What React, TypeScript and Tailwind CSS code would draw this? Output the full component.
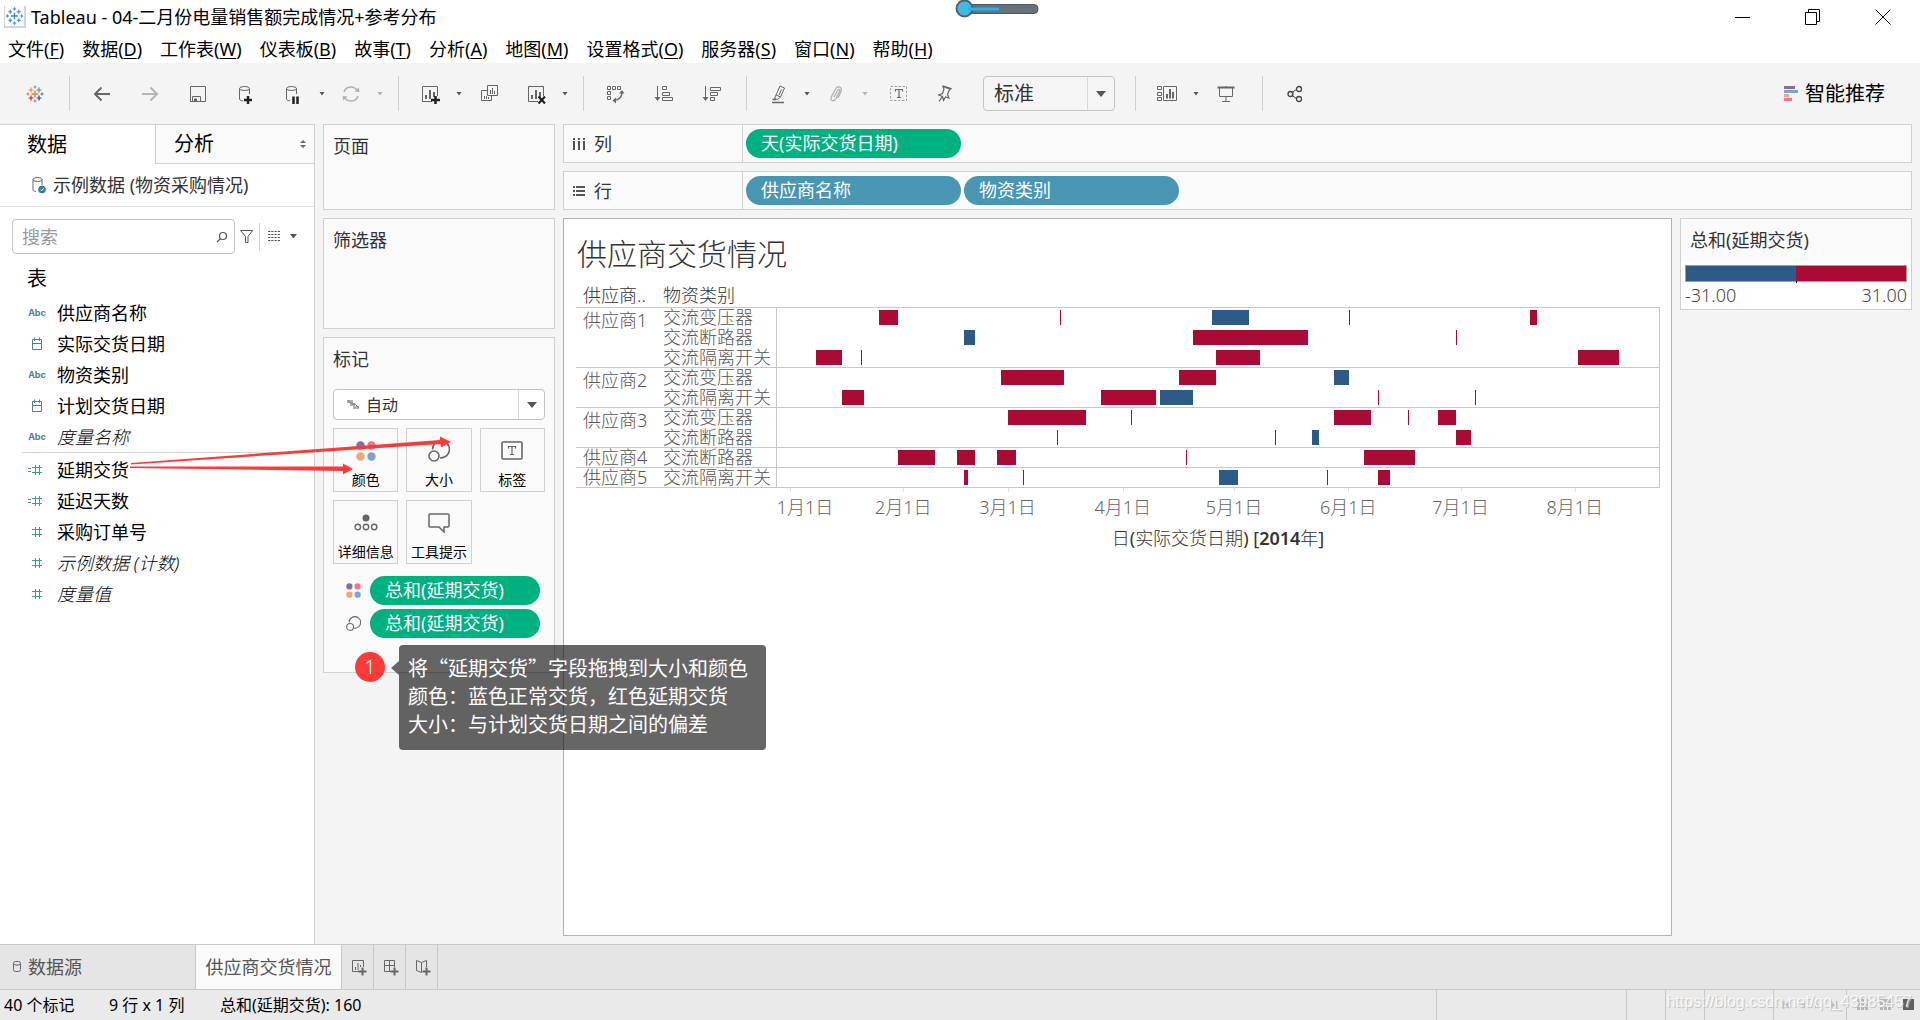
import type { ReactNode } from "react";

/* ---------- data ---------- */

const menus: [string, string][] = [
  ["文件", "F"],
  ["数据", "D"],
  ["工作表", "W"],
  ["仪表板", "B"],
  ["故事", "T"],
  ["分析", "A"],
  ["地图", "M"],
  ["设置格式", "O"],
  ["服务器", "S"],
  ["窗口", "N"],
  ["帮助", "H"],
];

type FieldKind = "abc" | "date" | "num" | "calc";
type Field = { kind: FieldKind; name: string; italic?: boolean };

const dimensions: Field[] = [
  { kind: "abc", name: "供应商名称" },
  { kind: "date", name: "实际交货日期" },
  { kind: "abc", name: "物资类别" },
  { kind: "date", name: "计划交货日期" },
  { kind: "abc", name: "度量名称", italic: true },
];

const measures: Field[] = [
  { kind: "calc", name: "延期交货" },
  { kind: "calc", name: "延迟天数" },
  { kind: "num", name: "采购订单号" },
  { kind: "num", name: "示例数据 (计数)", italic: true },
  { kind: "num", name: "度量值", italic: true },
];

/* Bars are [start, width, colour] on an axis of 882 units. */
const AXIS = 882;
type Bar = [number, number, "r" | "b"];
type Row = { supplier?: string; span?: number; category: string; bars: Bar[] };

const rows: Row[] = [
  {
    supplier: "供应商1",
    span: 3,
    category: "交流变压器",
    bars: [[102, 19, "r"], [283, 1, "r"], [435, 37, "b"], [572, 1, "r"], [753, 7, "r"]],
  },
  { category: "交流断路器", bars: [[187, 11, "b"], [416, 115, "r"], [679, 1, "r"]] },
  {
    category: "交流隔离开关",
    bars: [[39, 26, "r"], [84, 1, "r"], [439, 44, "r"], [801, 41, "r"]],
  },
  {
    supplier: "供应商2",
    span: 2,
    category: "交流变压器",
    bars: [[224, 63, "r"], [402, 37, "r"], [557, 15, "b"]],
  },
  {
    category: "交流隔离开关",
    bars: [[65, 22, "r"], [324, 55, "r"], [383, 33, "b"], [601, 1, "r"], [698, 1, "r"]],
  },
  {
    supplier: "供应商3",
    span: 2,
    category: "交流变压器",
    bars: [[231, 78, "r"], [354, 1, "r"], [557, 37, "r"], [631, 1, "r"], [661, 18, "r"]],
  },
  {
    category: "交流断路器",
    bars: [[280, 1, "r"], [498, 1, "r"], [535, 7, "b"], [679, 15, "r"]],
  },
  {
    supplier: "供应商4",
    span: 1,
    category: "交流断路器",
    bars: [[121, 37, "r"], [180, 18, "r"], [220, 19, "r"], [409, 1, "r"], [587, 51, "r"]],
  },
  {
    supplier: "供应商5",
    span: 1,
    category: "交流隔离开关",
    bars: [[187, 4, "r"], [246, 1, "r"], [442, 19, "b"], [550, 1, "r"], [601, 12, "r"]],
  },
];

const months: { label: string; tick: number; at: number }[] = [
  { label: "1月1日", tick: 14, at: 29 },
  { label: "2月1日", tick: 127, at: 127 },
  { label: "3月1日", tick: 231, at: 231 },
  { label: "4月1日", tick: 346, at: 346 },
  { label: "5月1日", tick: 457, at: 457 },
  { label: "6月1日", tick: 571, at: 571 },
  { label: "7月1日", tick: 683, at: 683 },
  { label: "8月1日", tick: 797, at: 797 },
];

const pct = (v: number) => `${(v / AXIS) * 100}%`;

/* ---------- icons ---------- */

function Icon({
  children,
  w = 20,
  h = 20,
  stroke = "#666",
}: {
  children: ReactNode;
  w?: number;
  h?: number;
  stroke?: string;
}) {
  return (
    <svg
      aria-hidden="true"
      className="shrink-0"
      width={w}
      height={h}
      viewBox={`0 0 ${w} ${h}`}
      fill="none"
      stroke={stroke}
    >
      {children}
    </svg>
  );
}

function plus(x: number, y: number, r: number, c: string, sw = 1) {
  return (
    <path
      key={`${x}-${y}`}
      d={`M${x - r} ${y}H${x + r}M${x} ${y - r}V${y + r}`}
      stroke={c}
      strokeWidth={sw}
    />
  );
}

const LogoIcon = () => (
  <Icon>
    {plus(10, 10, 3.5, "#eb7f2d", 1.4)}
    {plus(6, 6, 2.5, "#eb912c", 1.2)}
    {plus(14, 6, 2.5, "#59879b", 1.2)}
    {plus(6, 14, 2.5, "#c72037", 1.2)}
    {plus(14, 14, 2.5, "#1f457e", 1.2)}
    {plus(10, 3, 1.5, "#7199a6")}
    {plus(3, 10, 1.5, "#7199a6")}
    {plus(17, 10, 1.5, "#5b6591")}
    {plus(10, 17, 1.5, "#7f88b0")}
  </Icon>
);

const AppIcon = () => (
  <svg
    aria-hidden="true"
    className="shrink-0 border-r-2 border-b-2 border-l border-gray-300 bg-gray-50"
    width="22"
    height="22"
    viewBox="0 0 20 20"
    fill="none"
  >
    {plus(10, 10, 3.5, "#3b8ac0", 1.4)}
    {plus(5.5, 5.5, 2, "#3b8ac0", 1.2)}
    {plus(14.5, 5.5, 2, "#3b8ac0", 1.2)}
    {plus(5.5, 14.5, 2, "#3b8ac0", 1.2)}
    {plus(14.5, 14.5, 2, "#3b8ac0", 1.2)}
    {plus(10, 2.5, 1.7, "#3b8ac0")}
    {plus(2.5, 10, 1.7, "#3b8ac0")}
    {plus(17.5, 10, 1.7, "#3b8ac0")}
    {plus(10, 17.5, 1.7, "#3b8ac0")}
  </svg>
);

const cylinder = (
  <>
    <ellipse cx="8.5" cy="4.5" rx="5" ry="2" />
    <path d="M3.5 4.5V15c0 1 1.500 1.700 3.500 1.900M13.500 4.500V10" />
  </>
);

const sheetBox = <path d="M17.500 12V2.500H2.500V17.500H12" />;
const sheetBars = <path d="M6 15V11M10 15V6M14 13V8" strokeWidth="2" />;

const Caret = ({ light = false }: { light?: boolean }) => (
  <svg aria-hidden="true" width="6" height="4" viewBox="0 0 6 4" fill={light ? "#b0b0b0" : "#555"}>
    <path d="M0.500 0H5.500L3 3.500z" />
  </svg>
);

const BigCaret = () => (
  <svg aria-hidden="true" width="10" height="6" viewBox="0 0 10 6" fill="#555">
    <path d="M0 0H10L5 6z" />
  </svg>
);

const ColorDots = ({ size = 20 }: { size?: number }) => (
  <svg aria-hidden="true" width={size} height={size} viewBox="0 0 20 20">
    <circle cx="4.500" cy="4.500" r="4.200" fill="#876f9c" />
    <circle cx="15.500" cy="4.500" r="4.200" fill="#f6738a" />
    <circle cx="4.500" cy="15.500" r="4.200" fill="#f3a47a" />
    <circle cx="15.500" cy="15.500" r="4.200" fill="#7fa3cd" />
  </svg>
);

const SizeIcon = ({ size = 22 }: { size?: number }) => (
  <svg
    aria-hidden="true"
    width={size}
    height={size}
    viewBox="0 0 22 22"
    fill="none"
    stroke="#666"
    strokeWidth="1.600"
  >
    <circle cx="6" cy="16" r="5" />
    <path d="M4.500 9.500A8.500 8.500 0 1 1 12 17.800" />
  </svg>
);

function FieldIcon({ kind }: { kind: FieldKind }) {
  if (kind === "abc")
    return (
      <span className="w-6 text-center font-['Inter',sans-serif] text-[9px] leading-3 font-bold text-[#4c8199]">
        Abc
      </span>
    );
  if (kind === "date")
    return (
      <Icon w={24} h={14} stroke="#4c8199">
        <path d="M7.500 2.500H16.500V12.500H7.500zM7.500 6.500H16.500M9.500 0.500V4M14.500 0.500V4" />
      </Icon>
    );
  return (
    <Icon w={24} h={14} stroke="#3f9f78">
      <path d="M10.500 2V12M14.500 2V12M7 4.500H17M7 9.500H17" />
      {kind === "calc" && <path d="M3 5.500H6M3 8.500H6" />}
    </Icon>
  );
}

/* ---------- small parts ---------- */

function Tool({ label, split = false, children }: { label: string; split?: boolean; children: ReactNode }) {
  return (
    <button
      type="button"
      aria-label={label}
      className={`flex h-9 shrink-0 items-center justify-center ${split ? "w-[46px]" : "w-12"}`}
    >
      {children}
    </button>
  );
}

function Drop({ label, light = false }: { label: string; light?: boolean }) {
  return (
    <button type="button" aria-label={label} className="flex h-9 w-3 shrink-0 items-center justify-center">
      <Caret light={light} />
    </button>
  );
}

const Sep = ({ className = "mr-2 ml-3" }: { className?: string }) => (
  <div className={`h-[35px] w-px shrink-0 bg-[#cfcfcf] ${className}`} />
);

function FieldRow({ field }: { field: Field }) {
  return (
    <li>
      <button type="button" className="flex h-[31px] w-full items-center gap-2 pl-[25px] text-left">
        <FieldIcon kind={field.kind} />
        <span className={field.italic ? "font-light italic" : ""}>{field.name}</span>
      </button>
    </li>
  );
}

function Card({ title, className = "", children }: { title: string; className?: string; children?: ReactNode }) {
  return (
    <section className={`border border-[#d0d0d0] bg-[#fafafa] px-[9px] ${className}`}>
      <h2 className="h-11 leading-[42px] text-[#333]">{title}</h2>
      {children}
    </section>
  );
}

function Pill({ text, color }: { text: string; color: "green" | "blue" }) {
  return (
    <button
      type="button"
      className={`h-[29px] w-[215px] truncate rounded-full px-[15px] text-left leading-[29px] text-white ${
        color === "green" ? "bg-[#00b180]" : "bg-[#4996b2]"
      }`}
    >
      {text}
    </button>
  );
}

function Shelf({ icon, title, children }: { icon: ReactNode; title: string; children: ReactNode }) {
  return (
    <section className="flex h-[39px] items-stretch border border-[#d0d0d0] bg-[#fafafa]">
      <h2 className="flex w-[179px] shrink-0 items-center gap-2 border-r border-[#d0d0d0] pl-2 text-[#333]">
        {icon}
        {title}
      </h2>
      <div className="flex items-center gap-[3px] pl-[3px]">{children}</div>
    </section>
  );
}

function MarkButton({ label, children }: { label: string; children: ReactNode }) {
  return (
    <button
      type="button"
      className="flex h-[64px] flex-col items-center justify-between border border-[#d0d0d0] pt-[10px] pb-px text-sm leading-5 whitespace-nowrap text-black"
    >
      <span className="flex h-6 items-center">{children}</span>
      {label}
    </button>
  );
}

function MarkPill({ icon }: { icon: ReactNode }) {
  return (
    <div className="flex h-[29px] items-center">
      <span className="flex w-[37px] justify-center pl-1">{icon}</span>
      <button
        type="button"
        className="mr-[5px] h-[29px] flex-1 rounded-full bg-[#00b180] px-[15px] text-left leading-[29px] text-white"
      >
        总和(延期交货)
      </button>
    </div>
  );
}

/* ---------- page sections ---------- */

function TitleBar() {
  return (
    <header className="relative bg-white text-black">
      <div className="flex h-[34px] items-center">
        <div className="flex flex-1 items-center gap-[5px] pl-1">
          <AppIcon />
          <h1>Tableau - 04-二月份电量销售额完成情况+参考分布</h1>
        </div>
        <div className="mr-0.5 flex">
          <button type="button" aria-label="最小化" className="flex h-8 w-[70px] items-center justify-center">
            <Icon w={16} h={16} stroke="#000">
              <path d="M0 8.500H15" />
            </Icon>
          </button>
          <button type="button" aria-label="还原" className="flex h-8 w-[70px] items-center justify-center">
            <Icon w={16} h={16} stroke="#000">
              <path d="M0.500 3.500H11.500V15.500H0.500zM3.500 3.500V0.500H14.500V12.500H11.500" />
            </Icon>
          </button>
          <button type="button" aria-label="关闭" className="flex h-8 w-[70px] items-center justify-center">
            <Icon w={16} h={16} stroke="#000">
              <path d="M0.500 0.500L15.500 15.500M15.500 0.500L0.500 15.500" />
            </Icon>
          </button>
        </div>
      </div>
      <nav className="flex h-[29px] items-start gap-[18px] pl-2">
        {menus.map(([name, key]) => (
          <button key={key} type="button" className="leading-[30px] whitespace-nowrap">
            {name}(<u className="underline-offset-2">{key}</u>)
          </button>
        ))}
      </nav>
      <svg
        aria-hidden="true"
        className="absolute top-0 left-1/2 -ml-1.5"
        width="86"
        height="20"
        viewBox="0 0 86 20"
      >
        <rect x="8" y="4.500" width="76" height="9" rx="4" fill="#64727e" stroke="#4b5963" />
        <circle cx="10.500" cy="8.500" r="8" fill="#3fb9e6" stroke="#526370" strokeWidth="2" />
        <rect x="14" y="7.500" width="31" height="3" fill="#2fb0ea" />
      </svg>
    </header>
  );
}

function Toolbar() {
  return (
    <div className="flex h-[61px] shrink-0 items-center">
      <button type="button" aria-label="起始页" className="flex h-9 w-[69px] items-center justify-center">
        <LogoIcon />
      </button>
      <Sep className="mr-2" />
      <Tool label="撤消">
        <Icon>
          <path d="M18 10H3M9.500 3.500L3 10L9.500 16.500" strokeWidth="2" />
        </Icon>
      </Tool>
      <Tool label="重做">
        <Icon stroke="#b5b5b5">
          <path d="M2 10H17M10.500 3.500L17 10L10.500 16.500" strokeWidth="2" />
        </Icon>
      </Tool>
      <Tool label="保存">
        <Icon>
          <path d="M2.500 2.500H17.500V17.500H2.500zM4.500 17.500V12.500H12.500V17.500" />
          <path d="M6 16H9" strokeWidth="3" />
        </Icon>
      </Tool>
      <Tool label="新建数据源">
        <Icon>
          {cylinder}
          <path d="M8 16H16M12 12V20" stroke="#222" strokeWidth="2.500" />
        </Icon>
      </Tool>
      <Tool label="暂停自动更新" split>
        <Icon>
          {cylinder}
          <path d="M10.500 12.500V20M14.500 12.500V20" stroke="#222" strokeWidth="2.500" />
        </Icon>
      </Tool>
      <Drop label="自动更新选项" />
      <Tool label="运行更新" split>
        <Icon stroke="#b0b0b0">
          <path d="M3 8A7.300 7.300 0 0 1 16.500 7M17 12A7.300 7.300 0 0 1 3.500 13" strokeWidth="1.500" />
          <path d="M13.500 7.500L18.500 8L17.800 3.500zM6.500 12.500L1.500 12L2.200 16.500z" fill="#b0b0b0" stroke="none" />
        </Icon>
      </Tool>
      <Drop label="运行更新选项" light />
      <Sep />
      <Tool label="新建工作表" split>
        <Icon>
          {sheetBox}
          {sheetBars}
          <path d="M11 16H20M15.500 12V20" stroke="#222" strokeWidth="2.500" />
        </Icon>
      </Tool>
      <Drop label="新建选项" />
      <Tool label="复制">
        <Icon>
          <path d="M8.500 1.500H18.500V11.500H8.500zM8.500 6.500H2.500V16.500H12.500V11.500M11.500 10V6M13.500 10V4M15.500 10V7M5.500 15V12M7.500 15V12M9.500 15V13" />
        </Icon>
      </Tool>
      <Tool label="清除工作表" split>
        <Icon>
          {sheetBox}
          {sheetBars}
          <path d="M12.500 12.500L19 19.500M19 12.500L12.500 19.500" stroke="#222" strokeWidth="2.200" />
        </Icon>
      </Tool>
      <Drop label="清除选项" />
      <Sep />
      <Tool label="交换行和列">
        <Icon>
          <path d="M1.500 2.500H4.500V5.500H1.500zM6.500 2.500H9.500V5.500H6.500zM11.500 2.500H14.500V5.500H11.500zM1.500 7.500H4.500V10.500H1.500zM1.500 12.500H4.500V15.500H1.500z" />
          <path d="M16 8C16 13 13 16 8 16.500" strokeWidth="1.400" />
          <path d="M13 9.500L16 6L18.500 9.500zM10 13.500L6.500 16.500L10 19.500z" fill="#666" stroke="none" />
        </Icon>
      </Tool>
      <Tool label="升序排序">
        <Icon>
          <path d="M3.500 2V15M8.500 2.500H12.500V5.500H8.500zM8.500 8.500H15.500V11.500H8.500zM8.500 13.500H18.500V16.500H8.500z" />
          <path d="M0.500 13H6.500L3.500 17z" fill="#666" stroke="none" />
        </Icon>
      </Tool>
      <Tool label="降序排序">
        <Icon>
          <path d="M3.500 2V15M8.500 3.500H18.500V6.500H8.500zM8.500 8.500H15.500V11.500H8.500zM8.500 13.500H12.500V16.500H8.500z" />
          <path d="M0.500 13H6.500L3.500 17z" fill="#666" stroke="none" />
        </Icon>
      </Tool>
      <Sep className="mr-2 ml-2.5" />
      <Tool label="突出显示" split>
        <Icon>
          <path d="M12 2L16.500 4L12.500 13L8 11zM8 11L6.500 14.500L9.500 15.500L12.500 13M13.500 5.500L11 11" />
          <path d="M4.500 15.500L8 15.500M4 18.500H16" strokeWidth="1.500" />
        </Icon>
      </Tool>
      <Drop label="突出显示选项" />
      <Tool label="组成员" split>
        <Icon stroke="#b0b0b0">
          <path
            d="M8 13L11.500 6.500C12.500 4.500 14.500 5.500 13.500 7.500L10 14.500C8 18.500 3.500 16.500 5.500 12.500L9.500 5C11.500 1 17 3 15 7.500L12 14"
            strokeWidth="1.300"
          />
        </Icon>
      </Tool>
      <Drop label="组选项" light />
      <div className="w-1" />
      <Tool label="显示标记标签">
        <Icon>
          <rect x="1.500" y="2.500" width="16" height="14" stroke="#a0a0a0" strokeDasharray="2.500 1.500" />
          <path d="M6.500 7.500V5.500H13.500V7.500M10 5.500V13.500M8 13.500H12" strokeWidth="1.200" />
        </Icon>
      </Tool>
      <Tool label="固定轴">
        <Icon>
          <path
            d="M6 2.500L12.500 5M5.500 1.800L14 4.500L12 6.500L10.500 10.500L12 14L8.500 13L6.500 16.500L5.500 12.500L1.500 11L5.500 9.500L7 5L5.500 1.800M5.500 12.500L2 17.500"
            strokeWidth="1.200"
          />
        </Icon>
      </Tool>
      <div className="relative ml-3 w-[132px] shrink-0">
        <select
          aria-label="适合"
          className="h-[35px] w-full appearance-none rounded-sm border border-[#c4c4c4] bg-[#f5f5f5] pl-2.5 text-xl leading-8 text-[#333]"
        >
          <option>标准</option>
        </select>
        <div className="pointer-events-none absolute inset-y-px right-px flex w-[27px] items-center justify-center border-l border-[#d8d8d8]">
          <BigCaret />
        </div>
      </div>
      <Sep className="mr-2 ml-5" />
      <Tool label="显示/隐藏卡" split>
        <Icon w={22}>
          <path d="M1.500 2.500H5.500V5.500H1.500zM1.500 8.500H5.500V11.500H1.500zM1.500 13.500H5.500V16.500H1.500zM7.500 2.500H20.500V16.500H7.500z" />
          <path d="M11 14.500V10M14 14.500V5M17 14.500V8" strokeWidth="2" />
        </Icon>
      </Tool>
      <Drop label="显示卡选项" />
      <Tool label="演示模式">
        <Icon>
          <path d="M1.500 3.500H18.500" strokeWidth="2" />
          <path d="M3.500 4V12.500H16.500V4M10 12.500V17M6 17.500H14M10 2V4" />
        </Icon>
      </Tool>
      <Sep />
      <Tool label="共享工作簿">
        <Icon stroke="#444">
          <path d="M6.500 9L12 5M6.500 11L12 15" />
          <circle cx="5.500" cy="10" r="2.500" strokeWidth="1.300" />
          <circle cx="14" cy="5" r="2.500" strokeWidth="1.300" />
          <circle cx="14" cy="15" r="2.500" strokeWidth="1.300" />
        </Icon>
      </Tool>
      <button type="button" className="mr-[35px] ml-auto flex items-center gap-[7px] text-xl leading-8 text-black">
        <svg aria-hidden="true" width="14" height="16" viewBox="0 0 14 16">
          <path d="M0 0H11V3H0z" fill="#876f9c" />
          <path d="M0 4H14V7H0z" fill="#7fa3cd" />
          <path d="M0 8H5V11H0z" fill="#f3a47a" />
          <path d="M0 12H8V15H0z" fill="#f6738a" />
        </svg>
        智能推荐
      </button>
    </div>
  );
}

function DataPane() {
  return (
    <aside className="w-[315px] shrink-0 border-t border-r border-[#d0d0d0] bg-white text-black">
      <div className="flex h-[39px] text-xl leading-[40px]" role="tablist">
        <button type="button" role="tab" aria-selected="true" className="w-[155px] pl-[27px] text-left">
          数据
        </button>
        <button
          type="button"
          role="tab"
          aria-selected="false"
          className="flex flex-1 items-center justify-between border-b border-l border-[#d0d0d0] bg-[#fafafa] pr-2 pl-[18px]"
        >
          分析
          <svg aria-hidden="true" width="6" height="8" viewBox="0 0 6 8" fill="#5b6b78">
            <path d="M0 3L3 0L6 3zM0 5L3 8L6 5z" />
          </svg>
        </button>
      </div>
      <button
        type="button"
        className="flex h-[43px] w-full items-center gap-1.5 border-b border-[#e2e2e2] pl-[29px] text-left text-[#333]"
      >
        <Icon w={18}>
          <ellipse cx="8.500" cy="4.500" rx="4.500" ry="2" />
          <path d="M4 4.500V14.500C4 15.500 5.500 16.300 7 16.500M13 4.500V10" />
          <circle cx="13" cy="14.500" r="3.800" fill="#317d98" stroke="none" />
          <path d="M11.300 14.500L12.600 15.800L14.800 13.300" stroke="#fff" />
        </Icon>
        示例数据 (物资采购情况)
      </button>
      <div className="mt-3 flex items-center pl-3">
        <div className="flex h-[35px] w-[223px] items-center rounded-sm border border-[#c4c4c4] pr-1.5 pl-[9px]">
          <input
            type="text"
            aria-label="搜索"
            placeholder="搜索"
            className="w-full min-w-0 bg-transparent outline-none placeholder:text-[#999]"
          />
          <Icon w={12} h={12} stroke="#555">
            <circle cx="7" cy="5" r="3.500" strokeWidth="1.200" />
            <path d="M4.500 7.500L1 11" strokeWidth="1.200" />
          </Icon>
        </div>
        <button type="button" aria-label="筛选" className="ml-1">
          <Icon w={16} h={16} stroke="#555">
            <path d="M1.500 1.500H13.500L9 7.500V13.500H6.500V7.500z" />
          </Icon>
        </button>
        <div className="mx-1 h-7 w-px bg-[#cfcfcf]" />
        <button type="button" aria-label="查看方式" className="flex items-center gap-2.5 pl-1">
          <svg aria-hidden="true" width="12" height="11" viewBox="0 0 12 11" stroke="#555">
            <path d="M0 0.500H12M0 3.500H12M0 6.500H12M0 9.500H12" strokeDasharray="2.250 1" />
          </svg>
          <svg aria-hidden="true" width="7" height="5" viewBox="0 0 7 5" fill="#555">
            <path d="M0 0H7L3.500 4.500z" />
          </svg>
        </button>
      </div>
      <h2 className="mt-1.5 pl-[27px] text-xl leading-[37px]">表</h2>
      <ul>
        {dimensions.map((f) => (
          <FieldRow key={f.name} field={f} />
        ))}
      </ul>
      <ul className="ml-[22px] border-t border-[#d5d5d5] pt-px *:-ml-[22px]">
        {measures.map((f) => (
          <FieldRow key={f.name} field={f} />
        ))}
      </ul>
    </aside>
  );
}

function Cards() {
  return (
    <div className="ml-2 flex w-[232px] shrink-0 flex-col gap-2 text-[#333]">
      <Card title="页面" className="h-[86px]" />
      <Card title="筛选器" className="h-[111px]" />
      <Card title="标记" className="h-[336px]">
        <div className="relative mt-[7px]">
          <select
            aria-label="标记类型"
            className="h-[31px] w-full appearance-none rounded-sm border border-[#c4c4c4] bg-white pl-8 text-base text-[#333]"
          >
            <option>自动</option>
          </select>
          <svg
            aria-hidden="true"
            className="pointer-events-none absolute top-[11px] left-[14px]"
            width="13"
            height="10"
            viewBox="0 0 13 10"
            fill="#909090"
          >
            <path d="M0 0H6V3H0zM3 3H8V6H3zM6 6H12V9H6z" opacity="0.700" />
            <path d="M1 0L5 4H8L12 8" stroke="#777" fill="none" />
          </svg>
          <div className="pointer-events-none absolute inset-y-px right-px flex w-[26px] items-center justify-center border-l border-[#d8d8d8]">
            <BigCaret />
          </div>
        </div>
        <div className="mt-2 grid grid-cols-3 gap-2">
          <MarkButton label="颜色">
            <ColorDots />
          </MarkButton>
          <MarkButton label="大小">
            <SizeIcon />
          </MarkButton>
          <MarkButton label="标签">
            <Icon w={22}>
              <rect x="1" y="1" width="20" height="17" strokeWidth="1.600" rx="1" />
              <path d="M7.500 7.500V5.500H14.500V7.500M11 5.500V13.500M9 13.500H13" strokeWidth="1.200" />
            </Icon>
          </MarkButton>
          <MarkButton label="详细信息">
            <Icon w={24} h={18}>
              <circle cx="12" cy="4" r="3.500" fill="#666" stroke="none" />
              <circle cx="3.800" cy="13" r="2.700" strokeWidth="1.400" />
              <circle cx="12" cy="13" r="2.700" strokeWidth="1.400" />
              <circle cx="20.200" cy="13" r="2.700" strokeWidth="1.400" />
            </Icon>
          </MarkButton>
          <MarkButton label="工具提示">
            <Icon w={22}>
              <path
                d="M2 1H20A1 1 0 0 1 21 2V13A1 1 0 0 1 20 14H16V19L11 14H2A1 1 0 0 1 1 13V2A1 1 0 0 1 2 1z"
                strokeWidth="1.500"
              />
            </Icon>
          </MarkButton>
        </div>
        <div className="mt-3 flex flex-col gap-1">
          <MarkPill icon={<ColorDots size={15} />} />
          <MarkPill icon={<SizeIcon size={15} />} />
        </div>
      </Card>
    </div>
  );
}

function Chart() {
  return (
    <section className="min-w-0 flex-1 border border-[#b3b3b3] bg-white pt-3.5 pr-[11px] pl-3 font-light">
      <h2 className="pl-px text-[30px] leading-[42px] text-[#333]">供应商交货情况</h2>
      <table className="mt-2 w-full table-fixed border-separate border-spacing-0 leading-[19px] text-[#555]">
        <thead>
          <tr className="text-left text-[#333]">
            <th scope="col" className="h-6 w-[87px] pl-[7px] font-light">
              供应商..
            </th>
            <th scope="col" className="w-[113px] font-light">
              物资类别
            </th>
            <th aria-label="日(实际交货日期)" />
          </tr>
        </thead>
        <tbody>
          {rows.map((row, i) => {
            const line = row.supplier ? "border-t border-[#c8c8c8]" : "";
            return (
              <tr key={i}>
                {row.supplier && (
                  <th
                    scope="rowgroup"
                    rowSpan={row.span}
                    className={`border-t border-[#c8c8c8] pl-[7px] text-left align-top font-light ${
                      row.span === 1 ? "" : "pt-[3px]"
                    }`}
                  >
                    {row.supplier}
                  </th>
                )}
                <td className={`h-5 overflow-visible p-0 whitespace-nowrap ${line}`}>
                  <div className="h-[19px] leading-[19px]">{row.category}</div>
                </td>
                <td className={`h-5 border-x border-x-[#c8c8c8] p-0 align-bottom ${line}`}>
                  <div className="relative mb-0.5 h-[15px]">
                    {row.bars.map(([start, width, color]) => (
                      <div
                        key={start}
                        className={`absolute inset-y-0 min-w-px ${color === "r" ? "bg-[#a80c35]" : "bg-[#2e5a87]"}`}
                        style={{ left: pct(start), width: pct(width) }}
                      />
                    ))}
                  </div>
                </td>
              </tr>
            );
          })}
        </tbody>
      </table>
      <div className="border-t border-[#c8c8c8] pl-[200px] text-[#666]">
        <div className="relative h-9">
          {months.map((m) => (
            <div key={m.label}>
              <div className="absolute top-0 h-1 w-px bg-[#e3e3e3]" style={{ left: pct(m.tick) }} />
              <div
                className="absolute top-[7px] -translate-x-1/2 leading-6 whitespace-nowrap"
                style={{ left: pct(m.at) }}
              >
                {m.label}
              </div>
            </div>
          ))}
        </div>
        <div className="text-center leading-7 text-[#333]">
          日<span className="font-normal">(</span>实际交货日期<span className="font-normal">) [</span>
          <span className="font-semibold">2014</span>年<span className="font-normal">]</span>
        </div>
      </div>
    </section>
  );
}

function Legend() {
  return (
    <section className="w-[232px] shrink-0 self-start border border-[#d0d0d0] bg-white text-[#333]">
      <h2 className="h-[42px] bg-[#fafafa] pl-[9px] leading-[43px]">总和(延期交货)</h2>
      <div className="px-1 pt-1 pb-px">
        <div className="flex h-[17px] border border-[#a9a08e]">
          <div className="flex-1 bg-[#2e5a87]" />
          <div className="flex-1 bg-[#a80c35]" />
        </div>
        <div className="mx-auto -mt-1 h-[5px] w-px bg-black" />
        <div className="flex justify-between leading-[25px] font-light text-[#444]">
          <span>-31.00</span>
          <span>31.00</span>
        </div>
      </div>
    </section>
  );
}

function SheetTabs() {
  return (
    <nav className="flex h-[46px] shrink-0 items-stretch border-y border-[#c8c8c8] bg-[#e5e5e5] text-[#555]">
      <button type="button" className="flex w-[195px] items-center gap-1.5 pl-3 text-left">
        <Icon w={10} h={14}>
          <rect x="1.500" y="1.500" width="7" height="10" rx="2" />
          <path d="M1.500 4C3 5.500 7 5.500 8.500 4" />
        </Icon>
        数据源
      </button>
      <button type="button" className="w-[147px] border-x border-[#c8c8c8] bg-[#fafafa]">
        供应商交货情况
      </button>
      <button type="button" aria-label="新建工作表" className="w-8 border-r border-[#c8c8c8] pl-2">
        <Icon w={18} h={18}>
          <path d="M13.500 9V2.500H2.500V13.500H9M5.500 12V9M8 12V5M10.500 9V7" />
          <path d="M8.500 13.500H16.500M12.500 9.500V17.500" strokeWidth="2" />
        </Icon>
      </button>
      <button type="button" aria-label="新建仪表板" className="w-8 border-r border-[#c8c8c8] pl-2">
        <Icon w={18} h={18}>
          <path d="M12.500 9V2.500H2.500V13.500H9M7.500 2.500V13.500M2.500 7.500H12.500" />
          <path d="M8.500 13.500H16.500M12.500 9.500V17.500" strokeWidth="2" />
        </Icon>
      </button>
      <button type="button" aria-label="新建故事" className="w-8 border-r border-[#c8c8c8] pl-2">
        <Icon w={18} h={18}>
          <path d="M12.500 9V2.500L7.500 4.500L2.500 2.500V12.500L7.500 14.500M7.500 4.500V14.500" />
          <path d="M8.500 13.500H16.500M12.500 9.500V17.500" strokeWidth="2" />
        </Icon>
      </button>
    </nav>
  );
}

function StatusBar() {
  return (
    <footer className="relative flex h-[30px] shrink-0 items-stretch bg-[#eaeaea] text-base leading-[30px] text-black">
      <span className="ml-1 w-[105px]">40 个标记</span>
      <span className="w-[111px]">9 行 x 1 列</span>
      <span>总和(延期交货): 160</span>
      <div className="ml-auto w-[190px] border-l border-[#c8c8c8]" />
      <div className="w-[39px] border-l border-[#c8c8c8]" />
      <div className="w-[39px] border-l border-[#c8c8c8]" />
      <div className="w-[69px] border-l border-[#c8c8c8]" />
      <div className="flex w-[73px] items-center border-l border-[#c8c8c8] pl-2">
        <svg aria-hidden="true" width="58" height="12" viewBox="0 0 58 12" fill="#bdbdbd">
          <path d="M1 2H2.500V10H1zM7 2V10L3 6zM23 2V10L19 6zM33 2V10L37 6zM49 2V10L53 6zM54 2H55.500V10H54z" />
        </svg>
      </div>
      <div className="flex w-[74px] items-center gap-3 border-l border-[#c8c8c8] pl-2.5">
        <svg aria-hidden="true" width="11" height="12" viewBox="0 0 11 12" fill="#b5b5b5">
          <path d="M0 0H3V3H0zM4 0H7V3H4zM8 0H11V3H8zM0 4H3V7H0zM4 4H7V7H4zM8 4H11V7H8zM0 8H3V11H0zM4 8H7V11H4zM8 8H11V11H8z" />
        </svg>
        <svg aria-hidden="true" width="11" height="12" viewBox="0 0 11 12" fill="#b5b5b5">
          <path d="M0 0H11V6H0zM0 8H3V11H0zM4 8H7V11H4zM8 8H11V11H8z" />
        </svg>
        <svg aria-hidden="true" width="11" height="12" viewBox="0 0 11 12" fill="#606060">
          <path d="M0 0H11V11H0z" />
        </svg>
      </div>
      <span className="absolute top-0 right-2 font-['Liberation_Sans',sans-serif] leading-6 text-white/80 [text-shadow:1px_1px_1px_#bbb]">
        https://blog.csdn.net/qq_43985457
      </span>
    </footer>
  );
}

function Annotation() {
  return (
    <>
      <svg
        aria-hidden="true"
        className="pointer-events-none absolute top-[431px] left-[128px]"
        width="330"
        height="50"
        viewBox="0 0 330 50"
        fill="#fc3a38"
      >
        <path d="M3 32L312 9L312 5.500L323 11L313 16.500L312.500 13L3 33.500z" />
        <path d="M2 35.500L215 35.500L215 32.500L225 38L215 43.500L215 40L2 37z" />
      </svg>
      <div className="absolute top-[645px] left-[355px] flex items-start">
        <span className="mt-[7px] flex size-[30px] items-center justify-center rounded-full bg-[#fc3a38] text-xl leading-[30px] font-light text-white">
          1
        </span>
        <svg aria-hidden="true" className="mt-4 ml-1.5" width="8" height="14" viewBox="0 0 8 14" fill="#666">
          <path d="M8 0V14L0 7z" />
        </svg>
        <p className="h-[105px] rounded-sm bg-black/60 py-[9px] pr-[18px] pl-[9px] font-['Noto_Sans_CJK_SC',sans-serif] text-xl leading-7 whitespace-nowrap text-white">
          将“延期交货”字段拖拽到大小和颜色
          <br />
          颜色：蓝色正常交货，红色延期交货
          <br />
          大小：与计划交货日期之间的偏差
        </p>
      </div>
    </>
  );
}

export default function App() {
  return (
    <div
      lang="zh-CN"
      className="relative flex h-screen flex-col overflow-hidden bg-[#f4f4f4] font-['Noto_Sans','Noto_Sans_CJK_SC',sans-serif] text-lg leading-6"
    >
      <TitleBar />
      <Toolbar />
      <main className="flex min-h-0 flex-1">
        <DataPane />
        <Cards />
        <div className="mx-2 flex min-w-0 flex-1 flex-col gap-2 pb-2">
          <Shelf
            title="列"
            icon={
              <svg aria-hidden="true" width="14" height="14" viewBox="0 0 14 14" fill="#555">
                <path d="M1 1H3V3H1zM6 1H8V3H6zM11 1H13V3H11zM1 4H3V13H1zM6 4H8V13H6zM11 4H13V13H11z" />
              </svg>
            }
          >
            <Pill text="天(实际交货日期)" color="green" />
          </Shelf>
          <Shelf
            title="行"
            icon={
              <svg aria-hidden="true" width="14" height="14" viewBox="0 0 14 14" fill="#555">
                <path d="M1 2H3V4H1zM1 6H3V8H1zM1 10H3V12H1zM4 2H13V4H4zM4 6H13V8H4zM4 10H13V12H4z" />
              </svg>
            }
          >
            <Pill text="供应商名称" color="blue" />
            <Pill text="物资类别" color="blue" />
          </Shelf>
          <div className="flex min-h-0 flex-1 items-stretch gap-2">
            <Chart />
            <Legend />
          </div>
        </div>
      </main>
      <SheetTabs />
      <StatusBar />
      <Annotation />
    </div>
  );
}
